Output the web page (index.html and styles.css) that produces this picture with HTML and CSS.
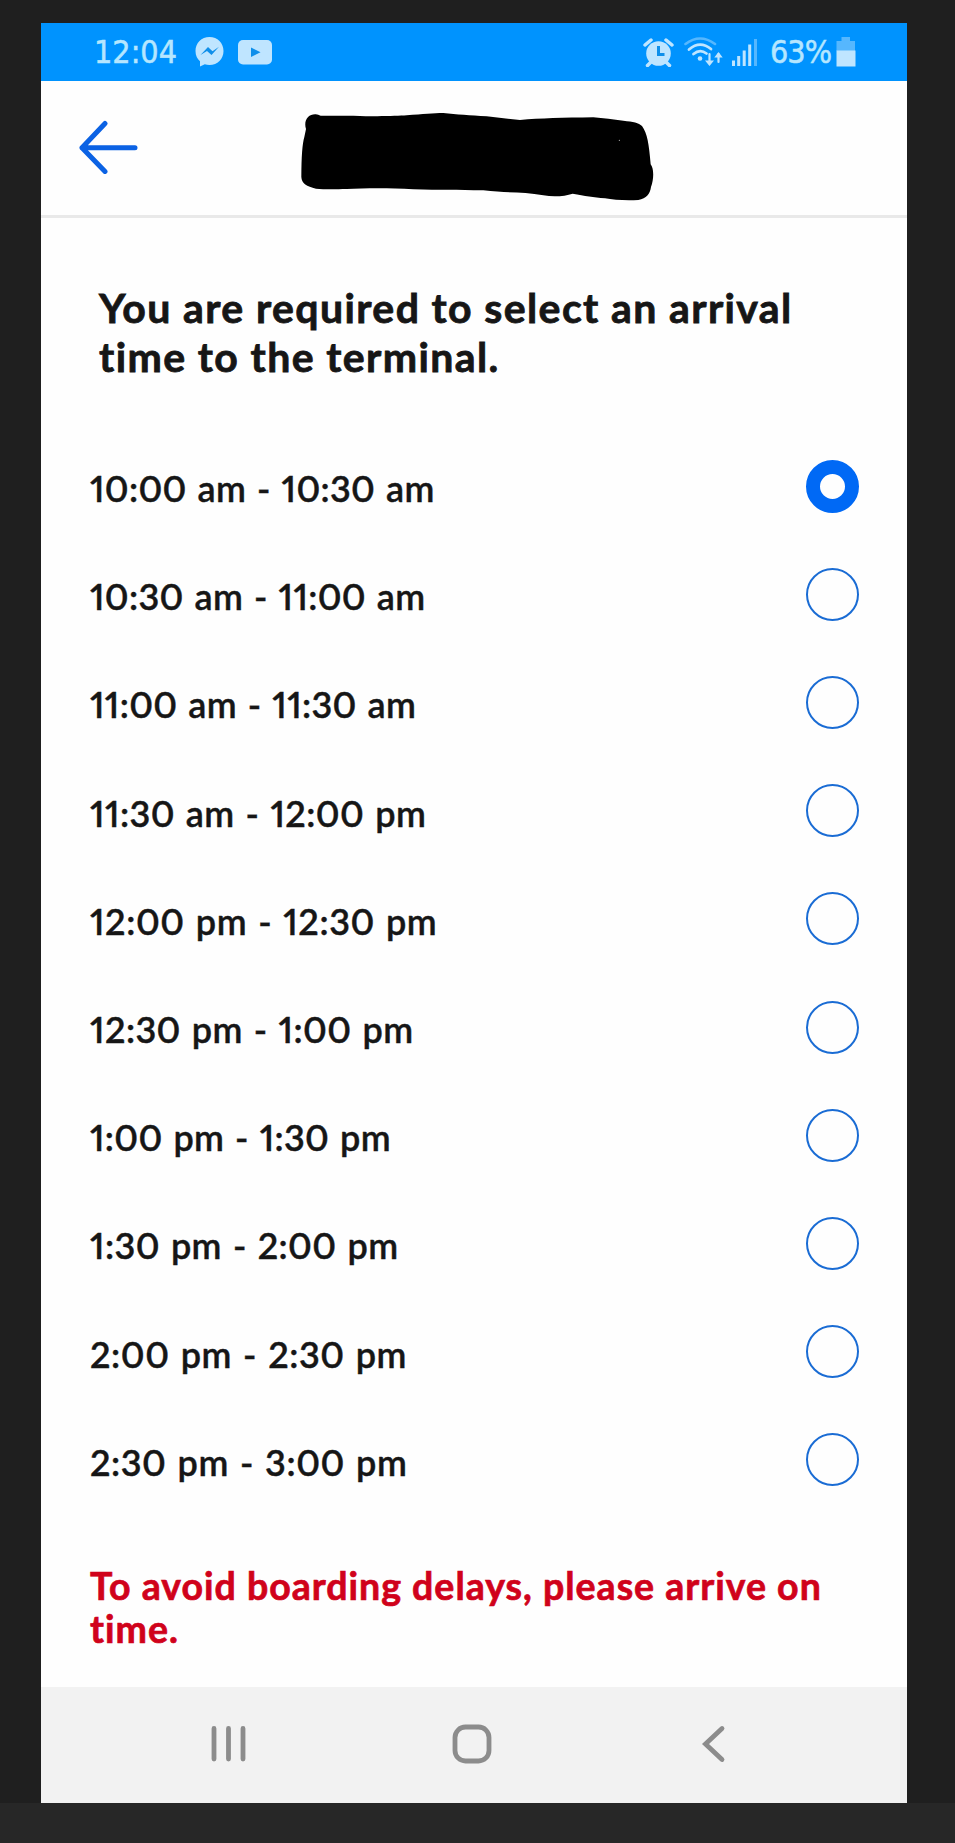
FILE: index.html
```html
<!DOCTYPE html>
<html lang="en">
  <head>
    <meta charset="UTF-8" />
    <meta name="viewport" content="width=device-width, initial-scale=1.0" />
    <title>Select arrival time</title>
    <link rel="stylesheet" href="styles.css">
  </head>
  <body>
    <div class="phone">
      <div class="statusbar">
        <div class="status-left">
          <span class="clock">12:04</span>
          <svg class="messenger" width="29" height="30" viewBox="0 0 29 30">
            <path class="fill" d="M14.5 0C6.5 0 .5 6 .5 14c0 4.500 1.800 7.800 4.500 10.300V29.500l4.800-2.200c1.500.5 3 .7 4.700.7 8 0 14-6 14-14S22.500 0 14.500 0z" />
            <path class="cut" d="M5.500 18l7.500-8 4.500 4.200 6.500-4.400-7.500 8.300-4.500-4.200z" />
          </svg>
          <svg class="youtube" width="34" height="25" viewBox="0 0 34 25">
            <rect class="fill" width="34" height="24.500" rx="5" />
            <path class="cut" d="M13 7.500v9.500l9.500-4.800z" />
          </svg>
        </div>
        <div class="status-right">
          <svg class="alarm" width="31" height="29" viewBox="0 0 31 29">
            <path class="line" d="M2 7l6-5M29 7l-6-5M8 24l-3.500 3.500M23 24l3.500 3.500" stroke-width="3.500" />
            <circle class="fill" cx="15.500" cy="15.500" r="12.300" />
            <path class="cutline" d="M15.500 8v8.500h6" stroke-width="3" />
          </svg>
          <svg class="wifi" width="39" height="30" viewBox="0 0 39 30">
            <path class="line dim" d="M1.500 7Q16 -4 31 7" stroke-width="2.600" />
            <path class="line" d="M5 12.500Q16 3 27 12M9.500 17Q16 11.500 22.500 16.500" stroke-width="2.800" />
            <circle class="fill" cx="16" cy="21.500" r="2.300" />
            <path class="line" d="M25.500 17v9M34.500 25v-8" stroke-width="2.200" />
            <path class="fill" d="M21 23.500h9l-4.500 5.500zM30.300 20.500h8.400l-4.200-5.500z" />
          </svg>
          <svg class="signal" width="26" height="29" viewBox="0 0 26 29">
            <path class="fill" d="M0 22.500h3v5.500H0zM5.200 18h3v10h-3zM10.700 12.500h3V28h-3zM16.200 6.500h3V28h-3z" />
            <path class="fill dim" d="M22 1h3v27h-3z" />
          </svg>
          <span class="percent">63%</span>
          <svg class="battery" width="20" height="30" viewBox="0 0 20 30">
            <path class="fill dim" d="M5.500 0h8.500v4H19v10H.5V4h5z" />
            <path class="fill" d="M.5 13.500H19.500V29.500H.5z" />
          </svg>
        </div>
      </div>

      <div class="header">
        <svg class="back" width="60" height="54" viewBox="0 0 60 54">
          <path d="M27 3.500L4 27.700 27 51.500M4 27.700H57" />
        </svg>
        <svg class="marker" width="353" height="88" viewBox="63 68 1059 264">
          <path d="M78 116C70 90 85 72 105 72C112 71 116 75 122 76L220 76C290 79 350 77 380 75C430 71 460 68 490 68C530 72 570 75 620 78L720 89C780 84 850 82 940 81C970 83 1000 88 1030 91C1060 94 1076 97 1086 107C1102 130 1107 160 1112 222C1122 235 1122 265 1113 290C1110 310 1100 325 1075 329C1040 331 1000 329 975 324C940 321 915 317 878 310C855 318 820 320 790 315C730 303 680 309 610 300C530 299 480 300 400 297C320 292 250 294 200 296C160 297 130 297 108 295C80 288 65 280 64 260C64 200 67 160 73 140z" />
          <circle cx="1018" cy="150" r="1.500" fill="#fff" />
        </svg>
      </div>

      <div class="content">
        <h1>You are required to select an arrival<br>time to the terminal.</h1>

        <div class="times">
          <label class="row"><span>10:00 am - 10:30 am</span><input type="radio" name="time" checked /></label>
          <label class="row"><span>10:30 am - 11:00 am</span><input type="radio" name="time" /></label>
          <label class="row"><span>11:00 am - 11:30 am</span><input type="radio" name="time" /></label>
          <label class="row"><span class="wide">11:30 am - 12:00 pm</span><input type="radio" name="time" /></label>
          <label class="row"><span class="wider">12:00 pm - 12:30 pm</span><input type="radio" name="time" /></label>
          <label class="row"><span class="wide">12:30 pm - 1:00 pm</span><input type="radio" name="time" /></label>
          <label class="row"><span>1:00 pm - 1:30 pm</span><input type="radio" name="time" /></label>
          <label class="row"><span class="wide">1:30 pm - 2:00 pm</span><input type="radio" name="time" /></label>
          <label class="row"><span class="wider">2:00 pm - 2:30 pm</span><input type="radio" name="time" /></label>
          <label class="row"><span class="wider">2:30 pm - 3:00 pm</span><input type="radio" name="time" /></label>
        </div>

        <p class="warning">To avoid boarding delays, please arrive on<br>time.</p>
      </div>

      <div class="navbar">
        <svg width="40" height="40" viewBox="0 0 40 40">
          <path d="M5 4.500v30.500M19.500 4.500v30.500M34 4.500v30.500" />
        </svg>
        <svg width="40" height="40" viewBox="0 0 40 40">
          <rect x="3" y="3" width="34" height="34" rx="10.500" />
        </svg>
        <svg width="40" height="40" viewBox="0 0 40 40">
          <path d="M28 4.500L11.500 20 28 35.500" />
        </svg>
      </div>
    </div>
    <div class="bottom"></div>
  </body>
</html>
```

FILE: styles.css
```css
* {
  box-sizing: border-box;
  font-family: "Lato", sans-serif;
}
body {
  margin: 0;
  height: 1843px;
  padding-top: 23px;
  background-color: #1f1f1f;
}
.phone {
  width: 866px;
  height: 1780px;
  margin-left: 41px;
  display: flex;
  flex-direction: column;
  background-color: #fefefe;
}
.statusbar {
  height: 58px;
  padding: 0 51px 0 53px;
  display: flex;
  justify-content: space-between;
  align-items: center;
  background-color: #0093fe;
  color: #b5e6ff;
}
.status-left,
.status-right {
  display: flex;
  align-items: center;
}
.clock,
.percent {
  font-family: "DejaVu Sans Condensed", "DejaVu Sans", sans-serif;
  font-stretch: condensed;
  font-size: 32px;
  line-height: 40px;
  white-space: nowrap;
  -webkit-text-stroke: 0.5px #b5e6ff;
}
.clock {
  width: 101px;
}
.percent {
  width: 66px;
  letter-spacing: -1px;
}
.messenger {
  margin-right: 14px;
}
.alarm {
  margin-right: 10px;
}
.wifi {
  margin-right: 9px;
}
.signal {
  margin-right: 12px;
}
.fill {
  fill: #bfe5ff;
}
.line {
  fill: none;
  stroke: #bfe5ff;
  stroke-linecap: round;
}
.cut {
  fill: #0f8fea;
}
.cutline {
  fill: none;
  stroke: #0f8fea;
}
.dim {
  opacity: 0.45;
}
.header {
  height: 137px;
  display: flex;
  align-items: flex-start;
  padding: 39px 0 0 37px;
  border-bottom: 3px solid #e9e9e9;
}
.back {
  fill: none;
  stroke: #0b62e4;
  stroke-width: 5;
  stroke-linecap: round;
  stroke-linejoin: round;
}
.marker {
  margin: -7px 0 0 163px;
}
.content {
  flex: 1;
  padding: 65px 48px 0 49px;
  color: #161616;
}
h1 {
  margin: 0 0 0 9px;
  font-size: 41px;
  line-height: 49px;
  font-weight: 700;
  letter-spacing: 1.38px;
  white-space: nowrap;
  -webkit-text-stroke: 0.8px #161616;
}
.times {
  margin-top: 51px;
}
.row {
  height: 108.2px;
  display: flex;
  justify-content: space-between;
  align-items: center;
}
.row span {
  padding-top: 4px;
  font-size: 36px;
  font-weight: 600;
  font-variant-numeric: proportional-nums;
  letter-spacing: 0.3px;
  word-spacing: 1.6px;
  white-space: nowrap;
  -webkit-text-stroke: 0.4px #161616;
}
.row .wide {
  letter-spacing: 0.4px;
}
.row .wider {
  letter-spacing: 0.55px;
}
.row input {
  appearance: none;
  width: 53px;
  height: 53px;
  margin: 0;
  border: 2px solid #1a6cd4;
  border-radius: 50%;
}
.row input:checked {
  border: 14px solid #0069f5;
}
.warning {
  margin: 50px 0 0;
  font-size: 37.5px;
  line-height: 43px;
  font-weight: 700;
  letter-spacing: 1px;
  color: #d0021b;
  white-space: nowrap;
  -webkit-text-stroke: 0.7px #d0021b;
}
.navbar {
  height: 116px;
  padding: 0 173px 3px 168px;
  display: flex;
  justify-content: space-between;
  align-items: center;
  background-color: #f2f2f2;
}
.navbar svg {
  fill: none;
  stroke: #8c8c8c;
  stroke-width: 4.800;
  stroke-linecap: round;
}
.bottom {
  height: 40px;
  background-color: #272727;
}
```
